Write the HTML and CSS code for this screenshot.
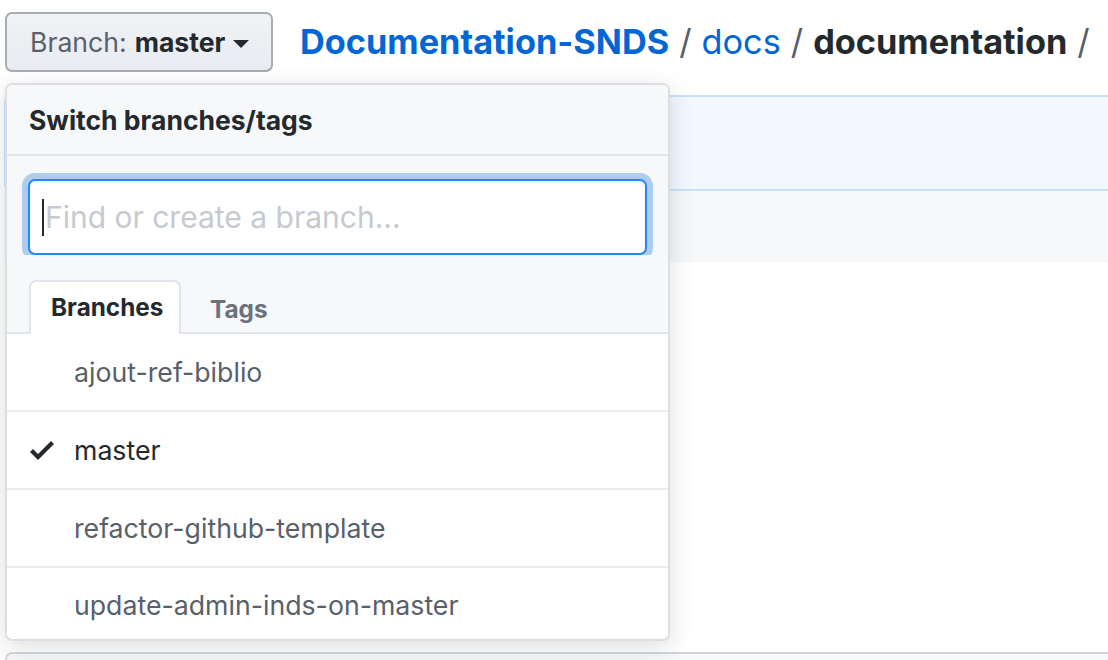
FILE: index.html
```html
<!DOCTYPE html>
<html lang="en">
<head>
<meta charset="utf-8">
<title>Switch branches</title>
<link rel="stylesheet" href="styles.css">
</head>
<body>
<div class="page">
  <div class="topbar">
    <button class="branch-btn"><span class="lbl">Branch:</span> <span class="name">master</span><span class="dd-caret"></span></button>
    <nav class="crumbs">
      <a class="repo">Documentation-SNDS</a><span class="sep">/</span><a class="dir">docs</a><span class="sep">/</span><strong class="cur">documentation</strong><span class="sep">/</span>
    </nav>
  </div>
  <div class="flash"></div>
  <div class="commit-bar"></div>
  <div class="spacer"></div>
  <div class="file-box"></div>

  <div class="menu">
    <div class="menu-header">Switch branches/tags</div>
    <div class="menu-filter">
      <div class="filter-input"><span class="text-caret"></span><span class="ph">Find or create a branch...</span></div>
    </div>
    <div class="menu-tabs">
      <span class="tab selected">Branches</span>
      <span class="tab">Tags</span>
    </div>
    <div class="menu-list">
      <div class="item"><span class="check"></span><span class="item-name">ajout-ref-biblio</span></div>
      <div class="item active"><span class="check"><svg viewBox="0 0 12 16" width="24" height="32"><path d="M12 5l-8 8-4-4 1.5-1.5L4 10l6.5-6.5L12 5z"/></svg></span><span class="item-name">master</span></div>
      <div class="item"><span class="check"></span><span class="item-name">refactor-github-template</span></div>
      <div class="item"><span class="check"></span><span class="item-name">update-admin-inds-on-master</span></div>
    </div>
  </div>
</div>
</body>
</html>
```

FILE: styles.css
```css
* { box-sizing: border-box; }
html, body { margin: 0; padding: 0; background: #fff; }
body {
  font-family: Inter, "Liberation Sans", Arial, sans-serif;
  color: #24292e;
  overflow: hidden;
  width: 1108px;
  height: 660px;
}
.page {
  position: relative;
  padding: 12px 0 0 4px;
  height: 660px;
}
.topbar {
  display: flex;
  align-items: center;
  height: 60px;
}
.branch-btn {
  height: 60px;
  width: 268px;
  margin-left: 1px;
  padding: 0 0 0 23px;
  display: flex;
  align-items: center;
  background: linear-gradient(180deg, #f0f3f6, #e8ebef);
  border: 2px solid #a9acb0;
  border-radius: 7px;
  font-family: inherit;
  font-size: 26.6px;
  color: #24292e;
}
.branch-btn .lbl { color: #586069; margin-right: 8px; }
.branch-btn .name { font-weight: 700; }
.dd-caret {
  display: inline-block;
  margin-left: 8px;
  margin-top: 3px;
  border-top: 8px solid #24292e;
  border-left: 8px solid transparent;
  border-right: 8px solid transparent;
}
.crumbs {
  margin-left: 27px;
  font-size: 34.3px;
  white-space: nowrap;
  padding-bottom: 2px;
}
.crumbs a { color: #0366d6; text-decoration: none; }
.crumbs .repo { font-weight: 700; }
.crumbs .cur { font-weight: 700; color: #24292e; }
.crumbs .sep { color: #586069; margin: 0 10px; }

.flash {
  margin-top: 23px;
  height: 96px;
  background: #f1f8ff;
  border: 2px solid #c8e1ff;
  border-right: 0;
  border-radius: 6px 0 0 6px;
}
.commit-bar {
  height: 71px;
  background: #f6f8fa;
}
.spacer { height: 390px; }
.file-box {
  height: 40px;
  margin-left: 1px;
  background: #f6f8fa;
  border: 2px solid #d1d5da;
  border-right: 0;
  border-radius: 7px 0 0 0;
}

.menu {
  position: absolute;
  left: 5px;
  top: 83px;
  width: 665px;
  height: 558px;
  background: #fff;
  border: 2px solid #dcdee1;
  border-radius: 7px;
  box-shadow: 0 6px 24px rgba(27, 31, 35, 0.15);
  overflow: hidden;
  display: flex;
  flex-direction: column;
}
.menu-header {
  height: 71px;
  flex: none;
  padding-left: 22px;
  display: flex;
  align-items: center;
  background: #f6f8fa;
  border-bottom: 2px solid #e1e4e8;
  font-size: 26.5px;
  font-weight: 700;
  color: #24292e;
}
.menu-filter {
  flex: none;
  background: #f6f8fa;
  padding: 23px 21px 0 21px;
}
.filter-input {
  height: 76px;
  display: flex;
  align-items: center;
  padding-left: 12px;
  background: #fff;
  border: 2px solid #2188ff;
  border-radius: 7px;
  box-shadow: 0 0 0 6px rgba(3, 102, 214, 0.3), inset 0 2px 3px rgba(27, 31, 35, 0.06);
  font-size: 30px;
}
.text-caret {
  width: 2px;
  height: 37px;
  background: #24292e;
  margin-right: 1px;
}
.ph { color: #c6cad0; }
.menu-tabs {
  flex: none;
  display: flex;
  align-items: flex-end;
  background: #f6f8fa;
  padding: 25px 0 0 22px;
  border-bottom: 2px solid #e1e4e8;
}
.tab {
  height: 52px;
  display: flex;
  align-items: center;
  padding: 0 20px 0 20px;
  font-size: 24.3px;
  font-weight: 700;
  color: #6a737d;
  border: 2px solid transparent;
  border-bottom: 0;
  margin-bottom: -2px;
  border-radius: 7px 7px 0 0;
}
.tab.selected {
  width: 152px;
  background: #fff;
  color: #24292e;
  border-color: #e1e4e8;
  height: 54px;
  padding-bottom: 2px;
}
.tab + .tab { padding-left: 27px; }
.menu-list { flex: 1; }
.item {
  height: 78px;
  display: flex;
  align-items: center;
  border-bottom: 2px solid #eaecef;
  font-size: 26.7px;
  color: #586069;
}
.item:last-child { border-bottom: 0; height: 73px; }
.check {
  width: 67px;
  flex: none;
  display: flex;
  justify-content: flex-start;
  padding-left: 23px;
}
.check svg { fill: #24292e; display: block; }
.item.active { color: #24292e; }
```
